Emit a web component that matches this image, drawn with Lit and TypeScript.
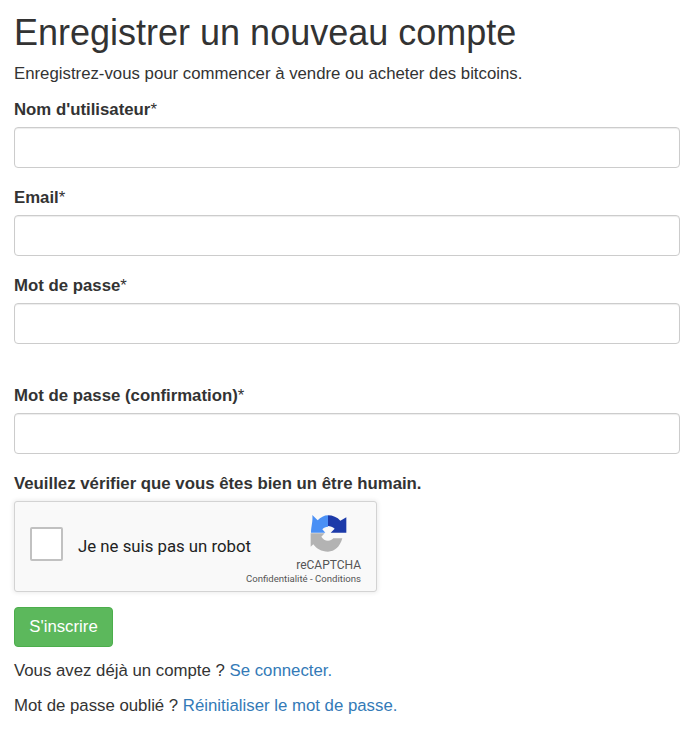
import { LitElement, html, css } from "lit";
import { customElement } from "lit/decorators.js";

@customElement("app-root")
export class AppRoot extends LitElement {
  static styles = css`
    :host { display: block; font-family: "Liberation Sans", Arial, sans-serif; font-size: 16.8px; line-height: 24px; color: #333; background: #fff; height: 734px; box-sizing: border-box; padding: 0 13px 0 14px; overflow: hidden; }
    h1 { margin: 13px 0 9px; font-size: 36px; line-height: 40px; font-weight: 400; }
    p { margin: 0 0 11px; }
    .intro { margin-bottom: 12px; }
    .group { margin-bottom: 18px; }
    .group.tall { margin-bottom: 40px; }
    label { display: block; font-weight: 700; margin-bottom: 5px; }
    label span { font-weight: 400; }
    input { display: block; width: 100%; height: 41px; box-sizing: border-box; border: 1px solid #ccc; border-radius: 4px; background: #fff; box-shadow: inset 0 1px 1px rgba(0,0,0,.075); padding: 6px 12px; outline: none; }
    .cap-label { margin-bottom: 5px; }
    .captcha { width: 363px; height: 91px; box-sizing: border-box; background: #f9f9f9; border: 1px solid #d3d3d3; border-radius: 3px; box-shadow: 0 0 4px 1px rgba(0,0,0,.08); display: flex; align-items: stretch; font-family: Roboto, sans-serif; color: #222; }
    .left { flex: 1; display: flex; align-items: center; padding: 0 0 2px 15px; gap: 15px; }
    .box { width: 33px; height: 34px; margin-bottom: 4px; box-sizing: border-box; background: #fff; border: 2px solid #c1c1c1; border-radius: 2px; }
    .robot { font-size: 16.8px; }
    .brand { width: 120px; padding: 8px 15px 0 0; box-sizing: border-box; display: flex; flex-direction: column; align-items: flex-end; }
    .logo { width: 48px; height: 48px; margin-right: 9px; display: block; }
    .rc { font-size: 12px; line-height: 14px; color: #555; }
    .terms { font-size: 9.6px; line-height: 12px; color: #555; margin-top: 1px; white-space: nowrap; }
    button { display: block; margin: 15px 0 12px; height: 40px; width: 99px; border: 1px solid #4cae4c; border-radius: 4px; background: #5cb85c; color: #fff; font: inherit; padding: 0; }
    a { color: #337ab7; text-decoration: none; }
  `;

  private field(name: string, tall = false) {
    return html`<div class="group ${tall ? "tall" : ""}"><label>${name}<span>*</span></label><input type="text" /></div>`;
  }

  render() {
    return html`
      <h1>Enregistrer un nouveau compte</h1>
      <p class="intro">Enregistrez-vous pour commencer à vendre ou acheter des bitcoins.</p>
      ${this.field("Nom d'utilisateur")}
      ${this.field("Email")}
      ${this.field("Mot de passe", true)}
      ${this.field("Mot de passe (confirmation)")}
      <label class="cap-label">Veuillez vérifier que vous êtes bien un être humain.</label>
      <div class="captcha">
        <div class="left"><div class="box"></div><div class="robot">Je ne suis pas un robot</div></div>
        <div class="brand">
          <svg class="logo" viewBox="0 0 144 144" aria-hidden="true">
            <path fill="#1c3aa9" d="M72 16 C86 16 100 22 109 32 L127 22 V68 H80 L92 56 C86 51 79 48 72 48 Z" />
            <path fill="#4a90f5" d="M25 15 L41 31 C50 22 60 16 72 16 V50 C65 50 59 53 55 58 L64 68 H21 C21 50 27 35 25 15 Z" />
            <path fill="#b3b3b3" d="M20 70 H62 L52 80 C56 87 64 92 72 92 C79 92 84 90 88 85 H115 C108 110 92 125 72 125 C52 125 37 116 28 103 L20 110 Z" />
          </svg>
          <div class="rc">reCAPTCHA</div>
          <div class="terms">Confidentialité - Conditions</div>
        </div>
      </div>
      <button type="button">S'inscrire</button>
      <p>Vous avez déjà un compte ? <a href="#">Se connecter.</a></p>
      <p>Mot de passe oublié ? <a href="#">Réinitialiser le mot de passe.</a></p>
    `;
  }
}
